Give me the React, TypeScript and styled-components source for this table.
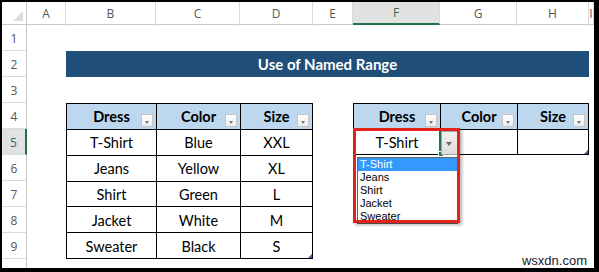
import React from 'react';
import styled, { createGlobalStyle, css } from 'styled-components';

const GlobalStyle = createGlobalStyle`
  html, body {
    margin: 0;
    padding: 0;
    background: #fff;
  }

  body {
    font-family: Lato, 'Open Sans', sans-serif;
  }
`;

type Row = string[];

const COLUMN_LETTERS = ['A', 'B', 'C', 'D', 'E', 'F', 'G', 'H', 'I'];
const ROW_NUMBERS = [1, 2, 3, 4, 5, 6, 7, 8, 9];

const inventory: Row[] = [
  ['T-Shirt', 'Blue', 'XXL'],
  ['Jeans', 'Yellow', 'XL'],
  ['Shirt', 'Green', 'L'],
  ['Jacket', 'White', 'M'],
  ['Sweater', 'Black', 'S'],
];

const dressOptions = ['T-Shirt', 'Jeans', 'Shirt', 'Jacket', 'Sweater'];

const Frame = styled.div`
  position: relative;
  width: 599px;
  height: 272px;
  box-sizing: border-box;
  border-style: solid;
  border-color: #000;
  border-width: 2px 5px 4px 2px;
  overflow: hidden;
  background: #fff;
`;

const Sheet = styled.div`
  display: grid;
  grid-template-columns: 25px 39px 90px 84px 73px 40px 87px 77px 72px 1fr;
  grid-template-rows: 23px repeat(9, 26px) 1fr;
  height: 100%;
`;

const Corner = styled.div`
  position: relative;
  grid-column: 1;
  grid-row: 1;
  border-right: 1px solid #c8c8c8;
  border-bottom: 1px solid #c8c8c8;

  &::after {
    content: '';
    position: absolute;
    right: 3px;
    bottom: 3px;
    border-style: solid;
    border-width: 0 0 10px 10px;
    border-color: transparent transparent #dcdcdc transparent;
  }
`;

const ColHeader = styled.div<{ $active?: boolean }>`
  grid-row: 1;
  display: flex;
  align-items: center;
  justify-content: center;
  box-sizing: border-box;
  border-right: 1px solid #dadada;
  border-bottom: 1px solid #c8c8c8;
  font-family: 'Open Sans', sans-serif;
  font-size: 12px;
  color: #555;

  ${({ $active }) =>
    $active &&
    css`
      background: #e1e1e1;
      border-bottom: 2px solid #217346;
      color: #3d6a4e;
    `}
`;

const RowHeader = styled.div<{ $active?: boolean }>`
  grid-column: 1;
  display: flex;
  align-items: center;
  justify-content: center;
  box-sizing: border-box;
  border-right: 1px solid #c8c8c8;
  border-bottom: 1px solid #dadada;
  padding-top: 2px;
  font-family: 'Open Sans', sans-serif;
  font-size: 12px;
  color: #555;

  ${({ $active }) =>
    $active &&
    css`
      background: #e1e1e1;
      border-right: 2px solid #217346;
      color: #3d6a4e;
    `}
`;

/* the partly visible row below row 9 */
const RowStub = styled.div`
  grid-column: 1;
  grid-row: 11;
  border-right: 1px solid #c8c8c8;
`;

const Banner = styled.div`
  grid-column: 3 / 10;
  grid-row: 3;
  display: flex;
  align-items: center;
  justify-content: center;
  background: #1f4e78;
  color: #fff;
  font-weight: 700;
  font-size: 15px;
`;

const TableGrid = styled.div<{ $cols: string; $col: string; $row: string }>`
  grid-column: ${({ $col }) => $col};
  grid-row: ${({ $row }) => $row};
  display: grid;
  grid-template-columns: ${({ $cols }) => $cols};
  grid-auto-rows: 1fr;
  box-sizing: border-box;
  border-right: 1px solid #000;
  border-bottom: 1px solid #000;
`;

const Cell = styled.div<{ $head?: boolean }>`
  position: relative;
  display: flex;
  align-items: center;
  justify-content: center;
  border-left: 1px solid #000;
  border-top: 1px solid #000;
  font-size: 14.5px;
  color: #000;
  padding-top: 1px;

  ${({ $head }) =>
    $head &&
    css`
      background: #bdd7ee;
      font-weight: 700;
    `}
`;

const FilterButton = styled.span`
  position: absolute;
  right: 3px;
  bottom: 2px;
  width: 12px;
  height: 13px;
  box-sizing: border-box;
  border: 1px solid #c4c4c4;
  background: linear-gradient(#ffffff, #ececec);

  &::after {
    content: '';
    position: absolute;
    left: 3px;
    top: 6px;
    border-style: solid;
    border-width: 3px 2.5px 0 2.5px;
    border-color: #7a7a7a transparent transparent transparent;
  }
`;

const ResizeMark = styled.span`
  position: absolute;
  right: 0;
  bottom: 0;
  border-style: solid;
  border-width: 0 0 4px 4px;
  border-color: transparent transparent #3f5f9f transparent;
`;

const SelectionEdge = styled.span`
  position: absolute;
  right: -1px;
  top: -1px;
  bottom: -1px;
  width: 2px;
  background: #217346;
  z-index: 2;

  &::after {
    content: '';
    position: absolute;
    left: -1px;
    bottom: -2px;
    width: 4px;
    height: 4px;
    background: #217346;
    border: 1px solid #fff;
  }
`;

const DropButton = styled.span`
  position: absolute;
  left: 87px;
  top: 1px;
  width: 17px;
  height: 24px;
  box-sizing: border-box;
  border: 1px solid #a6a6a6;
  background: linear-gradient(#f2f2f2, #dcdcdc);
  z-index: 3;

  &::after {
    content: '';
    position: absolute;
    left: 4px;
    top: 10px;
    border-style: solid;
    border-width: 4px 3.5px 0 3.5px;
    border-color: #6d6d6d transparent transparent transparent;
  }
`;

const OptionList = styled.ul`
  position: absolute;
  left: 3px;
  top: 27px;
  width: 101px;
  margin: 0;
  padding: 0;
  list-style: none;
  box-sizing: border-box;
  border: 1px solid #646464;
  background: #fff;
  z-index: 4;
`;

const Option = styled.li<{ $selected?: boolean }>`
  height: 13px;
  padding-left: 2px;
  font-family: 'Liberation Sans', Arial, sans-serif;
  font-size: 11px;
  line-height: 13px;
  color: #000;

  ${({ $selected }) =>
    $selected &&
    css`
      background: #3399ff;
      color: #fff;
    `}
`;

const Highlight = styled.span`
  position: absolute;
  left: -1px;
  top: -2px;
  width: 107px;
  height: 95px;
  box-sizing: border-box;
  border: 3px solid #e2231a;
  box-shadow: 2px 2px 3px rgba(0, 0, 0, 0.3);
  z-index: 5;
  pointer-events: none;
`;

const Watermark = styled.span`
  position: absolute;
  right: 7px;
  bottom: 1px;
  font-family: 'Liberation Sans', Arial, sans-serif;
  font-size: 13px;
  line-height: 1;
  color: #222;
`;

const HeaderCell = ({ label }: { label: string }) => (
  <Cell $head>
    {label}
    <FilterButton />
  </Cell>
);

const App = () => {
  return (
    <>
      <GlobalStyle />
      <Frame>
        <Sheet>
          <Corner />
          {COLUMN_LETTERS.map((letter, i) => (
            <ColHeader key={letter} $active={letter === 'F'} style={{ gridColumn: i + 2 }}>
              {letter}
            </ColHeader>
          ))}
          {ROW_NUMBERS.map((n) => (
            <RowHeader key={n} $active={n === 5} style={{ gridRow: n + 1 }}>
              {n}
            </RowHeader>
          ))}
          <RowStub />

          <Banner>Use of Named Range</Banner>

          <TableGrid $cols="90px 84px 1fr" $col="3 / 6" $row="5 / 11">
            <HeaderCell label="Dress" />
            <HeaderCell label="Color" />
            <HeaderCell label="Size" />
            {inventory.map((row, r) =>
              row.map((value, c) => (
                <Cell key={`${r}-${c}`}>
                  {value}
                  {r === inventory.length - 1 && c === row.length - 1 && <ResizeMark />}
                </Cell>
              ))
            )}
          </TableGrid>

          <TableGrid $cols="87px 77px 1fr" $col="7 / 10" $row="5 / 7">
            <HeaderCell label="Dress" />
            <HeaderCell label="Color" />
            <HeaderCell label="Size" />
            <Cell>
              T-Shirt
              <SelectionEdge />
              <DropButton />
              <OptionList>
                {dressOptions.map((option, i) => (
                  <Option key={option} $selected={i === 0}>
                    {option}
                  </Option>
                ))}
              </OptionList>
              <Highlight />
            </Cell>
            <Cell />
            <Cell>
              <ResizeMark />
            </Cell>
          </TableGrid>
        </Sheet>
        <Watermark>wsxdn.com</Watermark>
      </Frame>
    </>
  );
};

export default App;
